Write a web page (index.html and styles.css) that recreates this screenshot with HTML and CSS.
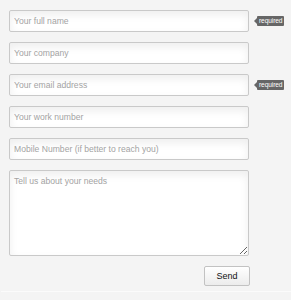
FILE: index.html
```html
<!DOCTYPE html>
<html lang="en">
<head>
    <meta charset="UTF-8">
    <meta name="viewport" content="width=device-width, initial-scale=1.0">
    <title>Contact</title>
    <link rel="stylesheet" href="styles.css">
</head>
<body>
    <!-- contact form -->
    <form class="contact">
        <div class="row">
            <input class="field" type="text" placeholder="Your full name">
            <span class="req"><span class="req-arrow"></span><span class="req-text">required</span></span>
        </div>
        <div class="row">
            <input class="field" type="text" placeholder="Your company">
        </div>
        <div class="row">
            <input class="field" type="text" placeholder="Your email address">
            <span class="req"><span class="req-arrow"></span><span class="req-text">required</span></span>
        </div>
        <div class="row">
            <input class="field" type="text" placeholder="Your work number">
        </div>
        <div class="row">
            <input class="field" type="text" placeholder="Mobile Number (if better to reach you)">
        </div>
        <div class="row">
            <textarea class="field message" placeholder="Tell us about your needs"></textarea>
        </div>
        <div class="actions">
            <button class="send" type="button">Send</button>
        </div>
    </form>
    <div class="footer-line"></div>
</body>
</html>
```

FILE: styles.css
```css
body{
    margin: 0;
    background: #f4f4f4;
    font-family: "Liberation Sans", Arial, Helvetica, sans-serif;
}
.contact{
    padding: 10px 0 0 9px;
}
.row{
    display: flex;
    align-items: center;
    margin-bottom: 10px;
}
.field{
    box-sizing: border-box;
    width: 240px;
    height: 22px;
    margin: 0;
    padding: 0 0 0 4px;
    border: 1px solid #c9c9c9;
    border-radius: 2px;
    background: #fff;
    box-shadow: inset 0 4px 8px rgba(0, 0, 0, 0.07);
    font-family: inherit;
    font-size: 8.6px;
    color: #333;
}
.field::placeholder{
    color: #a3a3a3;
}
.message{
    height: 86px;
    padding-top: 5px;
    resize: vertical;
}
.req{
    display: flex;
    align-items: center;
    margin-left: 5px;
}
.req-arrow{
    width: 0;
    height: 0;
    border-top: 3px solid transparent;
    border-bottom: 3px solid transparent;
    border-right: 3px solid #666;
}
.req-text{
    background: #666;
    color: #fff;
    font-size: 6.6px;
    line-height: 10px;
    height: 10px;
    padding: 0 2px;
    border-radius: 1px;
    letter-spacing: -0.1px;
}
.actions{
    display: flex;
    padding-left: 195px;
    margin-top: 3px;
}
.send{
    width: 46px;
    height: 20px;
    border: 1px solid #c2c2c2;
    border-radius: 2px;
    background: linear-gradient(#ffffff, #ececec);
    font-family: inherit;
    font-size: 9px;
    color: #111;
    padding: 0;
}
.footer-line{
    margin-top: 5px;
    margin-left: 1px;
    border-top: 1px solid #fbfbfb;
}
```
